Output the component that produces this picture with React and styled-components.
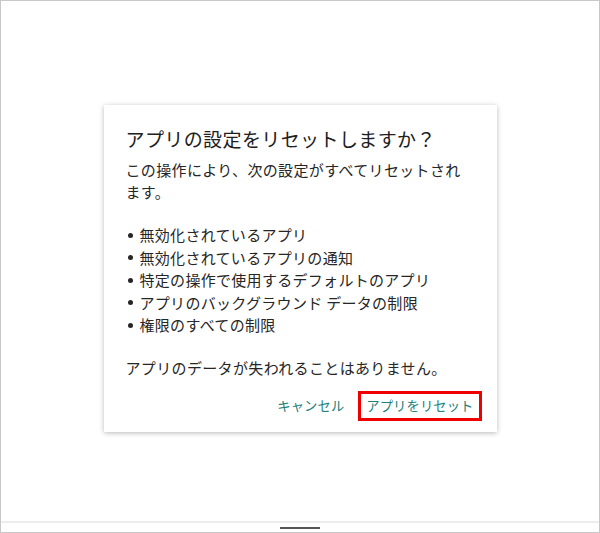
import React from "react";
import styled, { createGlobalStyle } from "styled-components";

const Global = createGlobalStyle`
  html, body { margin: 0; padding: 0; background: #fff; }
  body { font-family: "Noto Sans CJK JP", "Noto Sans", sans-serif; }
`;

const Screen = styled.div`
  width: 600px;
  height: 533px;
  box-sizing: border-box;
  border: 1px solid #c8c8c8;
  display: flex;
  flex-direction: column;
  background: #fff;
`;

const Main = styled.main`
  flex: 1;
  display: flex;
  justify-content: center;
  align-items: flex-start;
  padding-top: 104px;
`;

const Dialog = styled.div`
  width: 393px;
  box-sizing: border-box;
  background: #fff;
  box-shadow: 0 1px 5px rgba(0, 0, 0, 0.28);
  padding: 20px 15px 11px 22px;
  color: #262626;
`;

const Title = styled.h2`
  margin: 0 0 6px;
  font-size: 19px;
  font-weight: 400;
  line-height: 28px;
  letter-spacing: 0.4px;
  color: #202020;
`;

const Para = styled.p`
  margin: ${(p) => p.$mt || 0}px 8px 0 0;
  font-size: 15px;
  line-height: 22px;
  letter-spacing: 0.35px;
`;

const List = styled.ul`
  margin: 21px 0 0;
  padding: 0;
  list-style: none;
`;

const Item = styled.li`
  display: flex;
  align-items: center;
  font-size: 15px;
  line-height: 22.5px;
  letter-spacing: 0.3px;
  &::before {
    content: "";
    width: 5px;
    height: 5px;
    border-radius: 50%;
    background: #262626;
    margin: 0 7px 0 2px;
    flex: none;
  }
`;

const Actions = styled.div`
  display: flex;
  justify-content: flex-end;
  align-items: center;
  gap: 6px;
  margin-top: 12px;
`;

const TextButton = styled.button`
  font-family: inherit;
  background: none;
  box-sizing: border-box;
  height: 30px;
  border: 3px solid ${(p) => (p.$highlight ? "#ee0000" : "transparent")};
  color: #218179;
  font-size: 13.3px;
  font-weight: 400;
  letter-spacing: 0.1px;
  line-height: 18px;
  padding: 0 5px;
  cursor: pointer;
`;

const NavBar = styled.div`
  height: 9px;
  border-top: 2px solid #ededed;
  display: flex;
  justify-content: center;
  align-items: center;
`;

const Handle = styled.div`
  width: 40px;
  height: 2px;
  background: #555;
`;

export default function App() {
  return (
    <>
      <Global />
      <Screen>
        <Main>
          <Dialog>
            <Title>アプリの設定をリセットしますか？</Title>
            <Para>この操作により、次の設定がすべてリセットされます。</Para>
            <List>
              <Item>無効化されているアプリ</Item>
              <Item>無効化されているアプリの通知</Item>
              <Item>特定の操作で使用するデフォルトのアプリ</Item>
              <Item>アプリのバックグラウンド データの制限</Item>
              <Item>権限のすべての制限</Item>
            </List>
            <Para $mt={20}>アプリのデータが失われることはありません。</Para>
            <Actions>
              <TextButton>キャンセル</TextButton>
              <TextButton $highlight>アプリをリセット</TextButton>
            </Actions>
          </Dialog>
        </Main>
        <NavBar>
          <Handle />
        </NavBar>
      </Screen>
    </>
  );
}
